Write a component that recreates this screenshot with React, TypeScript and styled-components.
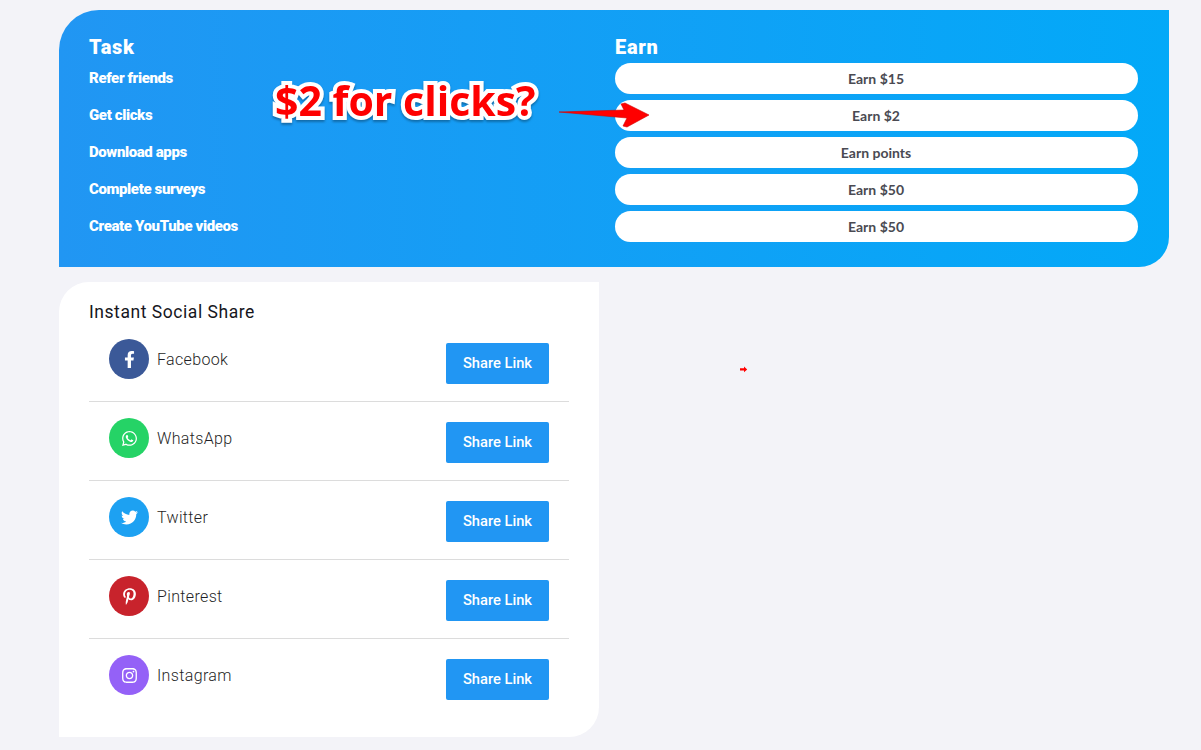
import { ReactNode } from "react";
import styled, { createGlobalStyle } from "styled-components";
import {
  FaFacebookF,
  FaWhatsapp,
  FaTwitter,
  FaPinterestP,
  FaInstagram,
} from "react-icons/fa";

const GlobalStyle = createGlobalStyle`
  html, body {
    margin: 0;
    padding: 0;
    background: #f3f3f8;
    font-family: "Roboto", "Liberation Sans", sans-serif;
  }
  * { box-sizing: border-box; }
`;

const Page = styled.div`
  position: relative;
  width: 1201px;
  height: 750px;
  overflow: hidden;
  padding: 10px 32px 0 59px;
`;

const TaskCard = styled.section`
  display: grid;
  grid-template-columns: 526px 523px;
  height: 257px;
  padding: 24px 31px 0 30px;
  border-radius: 40px 0 30px 0;
  background: linear-gradient(90deg, #2196f3, #03a9f8);
  color: #fff;
`;

const ColumnTitle = styled.h3`
  margin: 0;
  height: 29px;
  font-size: 20px;
  line-height: 27px;
  font-weight: 900;
  letter-spacing: 0.7px;
`;

const TaskColumn = styled.div`
  display: flex;
  flex-direction: column;
`;

const TaskLabel = styled.div`
  height: 37px;
  font-size: 15px;
  line-height: 31px;
  font-weight: 900;
  letter-spacing: -0.38px;
`;

const EarnPill = styled.div`
  height: 31px;
  margin-bottom: 6px;
  padding-right: 1px;
  border-radius: 16px;
  background: #fff;
  color: #4a4a52;
  font-family: "Lato", sans-serif;
  font-size: 14px;
  font-weight: 700;
  line-height: 32px;
  text-align: center;
`;

const ShareCard = styled.section`
  width: 540px;
  height: 455px;
  margin-top: 15px;
  padding: 19px 30px 0;
  border-radius: 30px 0 30px 0;
  background: #fff;
`;

const ShareTitle = styled.h4`
  margin: 0;
  height: 22px;
  font-size: 17.5px;
  line-height: 23px;
  font-weight: 400;
  letter-spacing: 0.55px;
  color: #16161c;
`;

const ShareRow = styled.div`
  display: flex;
  justify-content: space-between;
  height: 79px;
  padding: 16px 20px 0;
  border-bottom: 1px solid #dcdcdc;
  &:last-child {
    border-bottom: none;
  }
`;

const Network = styled.div`
  display: flex;
  align-items: center;
  gap: 8px;
  height: 40px;
`;

const Badge = styled.span<{ $color: string }>`
  display: flex;
  align-items: center;
  justify-content: center;
  width: 40px;
  height: 40px;
  border-radius: 50%;
  background: ${(p) => p.$color};
  color: #fff;
  font-size: 17px;
`;

const NetworkName = styled.span`
  padding-top: 2px;
  font-size: 16px;
  line-height: 20px;
  font-weight: 300;
  letter-spacing: 0.35px;
  color: #1f1f26;
`;

const ShareButton = styled.button`
  width: 103px;
  height: 41px;
  margin-top: 4px;
  padding: 0 0 2px;
  border: none;
  border-radius: 2px;
  background: #2196f3;
  color: #fff;
  font-family: inherit;
  font-size: 14.7px;
  font-weight: 500;
`;

const Callout = styled.div`
  position: absolute;
  left: 275px;
  top: 72px;
  font-family: "Open Sans", sans-serif;
  font-size: 41px;
  line-height: 56px;
  font-weight: 700;
  white-space: nowrap;
  color: #fe0000;
  -webkit-text-stroke: 8px #fff;
  paint-order: stroke fill;
  filter: drop-shadow(0 2px 1px rgba(0, 0, 0, 0.3));
`;

const CalloutArrow = styled.svg`
  position: absolute;
  left: 555px;
  top: 98px;
`;

const TinyArrow = styled.svg`
  position: absolute;
  left: 739px;
  top: 366px;
`;

const tasks = [
  { task: "Refer friends", earn: "Earn $15" },
  { task: "Get clicks", earn: "Earn $2" },
  { task: "Download apps", earn: "Earn points" },
  { task: "Complete surveys", earn: "Earn $50" },
  { task: "Create YouTube videos", earn: "Earn $50" },
];

const networks: { name: string; color: string; icon: ReactNode }[] = [
  { name: "Facebook", color: "#3b5998", icon: <FaFacebookF /> },
  { name: "WhatsApp", color: "#25d366", icon: <FaWhatsapp /> },
  { name: "Twitter", color: "#1da1f2", icon: <FaTwitter /> },
  { name: "Pinterest", color: "#c8232c", icon: <FaPinterestP /> },
  { name: "Instagram", color: "#9461f7", icon: <FaInstagram /> },
];

function App() {
  return (
    <Page>
      <GlobalStyle />
      <TaskCard>
        <TaskColumn>
          <ColumnTitle>Task</ColumnTitle>
          {tasks.map((t) => (
            <TaskLabel key={t.task}>{t.task}</TaskLabel>
          ))}
        </TaskColumn>
        <TaskColumn>
          <ColumnTitle>Earn</ColumnTitle>
          {tasks.map((t) => (
            <EarnPill key={t.task}>{t.earn}</EarnPill>
          ))}
        </TaskColumn>
      </TaskCard>

      <ShareCard>
        <ShareTitle>Instant Social Share</ShareTitle>
        {networks.map((n) => (
          <ShareRow key={n.name}>
            <Network>
              <Badge $color={n.color}>{n.icon}</Badge>
              <NetworkName>{n.name}</NetworkName>
            </Network>
            <ShareButton>Share Link</ShareButton>
          </ShareRow>
        ))}
      </ShareCard>

      <Callout>$2 for clicks?</Callout>
      <CalloutArrow width="100" height="34" viewBox="0 0 100 34">
        <path
          d="M4 14 L69 12 L66 6 L70 5 L94 17 L72 29 L68 28 L72 20 Z"
          fill="#f00"
          stroke="#d40000"
          strokeWidth="0.6"
          strokeLinejoin="round"
        />
      </CalloutArrow>
      <TinyArrow width="10" height="7" viewBox="0 0 10 7">
        <path d="M1 2.3 H5 V0.6 L8.2 3.4 L5 6.2 V4.5 H1 Z" fill="#f00" />
      </TinyArrow>
    </Page>
  );
}

export default App;
